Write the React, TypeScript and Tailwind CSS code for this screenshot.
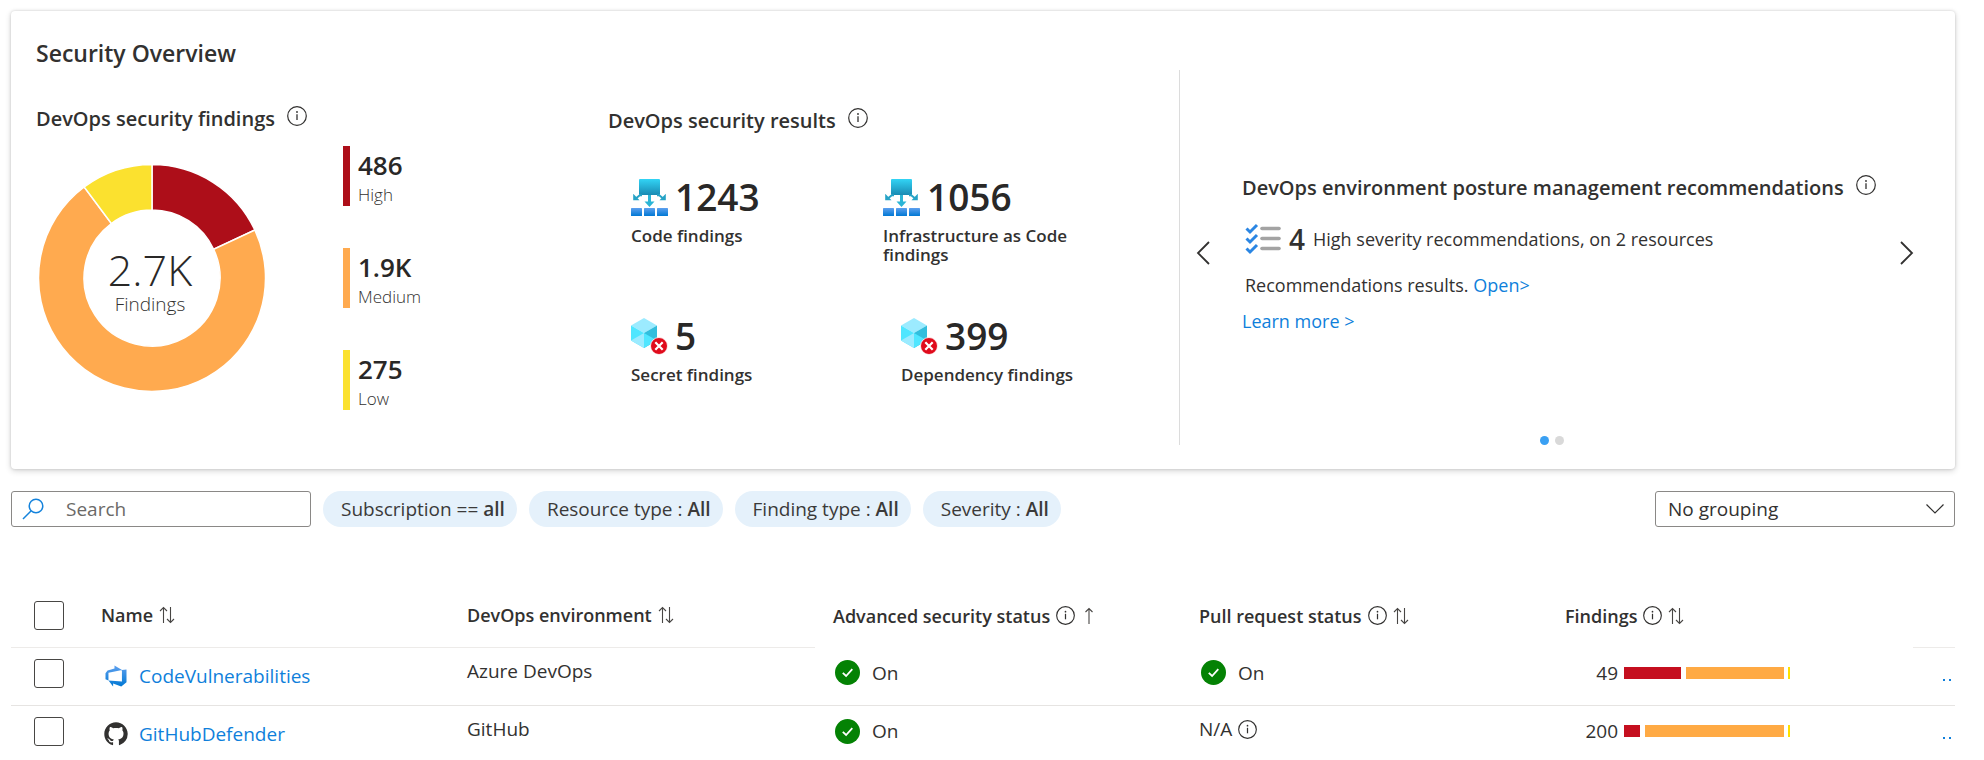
import type { ReactNode } from "react";

type Slice = { label: string; value: string; share: number; fill: string; bar: string };

const slices: Slice[] = [
  { label: "High", value: "486", share: 65, fill: "#ad0e19", bar: "bg-[#ad0e19]" },
  { label: "Medium", value: "1.9K", share: 258.3, fill: "#ffaa4f", bar: "bg-[#ffaa4f]" },
  { label: "Low", value: "275", share: 36.7, fill: "#fbe12f", bar: "bg-[#fbe12f]" },
];

function InfoIcon({ small = false }: { small?: boolean }) {
  return (
    <svg viewBox="0 0 20 20" className={small ? "size-[19px] shrink-0" : "size-5 shrink-0"} fill="none" role="img" aria-label="Info">
      <circle cx="10" cy="10" r="9.3" stroke="#323130" strokeWidth="1.2" />
      <path d="M10 8.2V14" stroke="#323130" strokeWidth="1.3" />
      <circle cx="10" cy="6" r="0.9" fill="#323130" />
    </svg>
  );
}

function SortIcon({ up = false }: { up?: boolean }) {
  return (
    <svg viewBox="0 0 16 18" className="h-[18px] w-4 shrink-0" fill="none" stroke="#484644" strokeWidth="1.1" aria-hidden="true">
      {up ? (
        <path d="M8 17V1.5M4.5 5 8 1.5 11.5 5" />
      ) : (
        <path d="M4.5 17V1.5M1 5l3.5-3.5L8 5M11.5 1v15.5M8 13l3.5 3.5L15 13" />
      )}
    </svg>
  );
}

function point(r: number, deg: number) {
  const a = ((deg - 90) * Math.PI) / 180;
  return `${(114 + r * Math.cos(a)).toFixed(2)} ${(114 + r * Math.sin(a)).toFixed(2)}`;
}

function Donut() {
  let start = 0;
  return (
    <div className="mt-[30px] grid size-[228px] shrink-0 place-items-center">
      <svg viewBox="0 0 228 228" className="col-start-1 row-start-1 size-[228px]" aria-hidden="true">
        {slices.map((s) => {
          const from = start;
          const to = start + s.share;
          start = to;
          const large = s.share > 180 ? 1 : 0;
          return (
            <path
              key={s.label}
              d={`M${point(113.5, from)}A113.5 113.5 0 ${large} 1 ${point(113.5, to)}L${point(68, to)}A68 68 0 ${large} 0 ${point(68, from)}Z`}
              fill={s.fill}
              stroke="#fff"
              strokeWidth="1.5"
            />
          );
        })}
      </svg>
      <div className="col-start-1 row-start-1 pt-2 pr-1 text-center">
        <div className="text-[43px] leading-[44px] font-light text-[#292827]">2.7K</div>
        <div className="text-[19px] leading-6 font-light">Findings</div>
      </div>
    </div>
  );
}

function TemplateIcon() {
  return (
    <svg viewBox="0 0 37 37" className="size-[37px] shrink-0" aria-hidden="true">
      <defs>
        <linearGradient id="tpl-top" x1="0" y1="0" x2="0" y2="1">
          <stop offset="0" stopColor="#32d4f5" />
          <stop offset="1" stopColor="#198ab3" />
        </linearGradient>
        <linearGradient id="tpl-box" x1="0" y1="0" x2="0" y2="1">
          <stop offset="0" stopColor="#5ea0ef" />
          <stop offset="1" stopColor="#0078d4" />
        </linearGradient>
      </defs>
      <rect x="8" y="0" width="21" height="16" rx="1" fill="url(#tpl-top)" />
      <path d="M17 16h3v6.500h3.500L18.500 28l-5-5.500H17z" fill="#2bb5d6" />
      <path d="M11 16.300H8.800L4.800 19.500M26 16.300h2.200l4 3.200" fill="none" stroke="#26a3c6" strokeWidth="2" />
      <path d="M2.200 14.800v6.500h6.300zM34.800 14.800v6.500h-6.300z" fill="#26a3c6" />
      <rect x="0" y="29" width="11" height="8" rx="0.6" fill="url(#tpl-box)" />
      <rect x="13" y="29" width="11" height="8" rx="0.6" fill="url(#tpl-box)" />
      <rect x="26" y="29" width="11" height="8" rx="0.6" fill="url(#tpl-box)" />
    </svg>
  );
}

function CubeIcon() {
  return (
    <svg viewBox="0 0 37 37" className="size-[37px] shrink-0" aria-hidden="true">
      <path d="M13 0 26 7.500 13 15 0 7.500z" fill="#9cebff" />
      <path d="M0 7.500 13 15v15L0 22.500z" fill="#50e6ff" />
      <path d="M26 7.500 13 15v15l13-7.500z" fill="#32bedd" />
      <path d="M0 22.500 13 15v15z" fill="#9cebff" />
      <path d="M26 22.500 13 15v15z" fill="#50e6ff" />
      <circle cx="28" cy="28" r="8.5" fill="#e00b1c" stroke="#fff" strokeWidth="0.8" />
      <path d="m24.300 24.300 7.400 7.400m0-7.400-7.400 7.400" stroke="#fff" strokeWidth="2.2" />
    </svg>
  );
}

function ChecklistIcon() {
  return (
    <svg viewBox="0 0 36 32" className="h-8 w-9 shrink-0" fill="none" aria-hidden="true">
      {[0, 10, 20].map((y) => (
        <g key={y}>
          <path d={`M1.5 ${y + 5.5}l3.500 3.500 7-7`} stroke="#2b86e3" strokeWidth="3" />
          <path d={`M17 ${y + 5.5}h17`} stroke="#a3a3a3" strokeWidth="3.6" strokeLinecap="round" />
        </g>
      ))}
    </svg>
  );
}

function AzureDevOpsIcon() {
  return (
    <svg viewBox="0 0 16 16" className="size-6 shrink-0" aria-hidden="true">
      <defs>
        <linearGradient id="ado" x1="0" y1="1" x2="0" y2="0">
          <stop offset="0" stopColor="#0078d4" />
          <stop offset="1" stopColor="#5ea0ef" />
        </linearGradient>
      </defs>
      <path fill="url(#ado)" d="M15 3.622v8.512L11.500 15l-5.425-1.975v1.958L3.004 10.970l8.951.7V4.005L15 3.622zm-2.984.428L6.994 1v2.001L2.382 4.356 1 6.130v4.029l1.978.873V5.869l9.038-1.818z" />
    </svg>
  );
}

function GitHubIcon() {
  return (
    <svg viewBox="-0.2 -0.2 16.4 16.4" className="size-6 shrink-0" aria-hidden="true">
      <path
        fill="#323130"
        d="M8 0C3.58 0 0 3.58 0 8c0 3.54 2.29 6.53 5.47 7.59.4.07.55-.17.55-.38 0-.19-.01-.82-.01-1.49-2.01.37-2.53-.49-2.69-.94-.09-.23-.48-.94-.82-1.13-.28-.15-.68-.52-.01-.53.63-.01 1.08.58 1.23.82.72 1.21 1.87.87 2.33.66.07-.52.28-.87.51-1.07-1.78-.2-3.64-.89-3.64-3.95 0-.87.31-1.59.82-2.15-.08-.2-.36-1.02.08-2.12 0 0 .67-.21 2.2.82.64-.18 1.32-.27 2-.27.68 0 1.36.09 2 .27 1.53-1.04 2.2-.82 2.2-.82.44 1.1.16 1.92.08 2.12.51.56.82 1.27.82 2.15 0 3.07-1.87 3.75-3.65 3.95.29.25.54.73.54 1.48 0 1.07-.01 1.93-.01 2.2 0 .21.15.46.55.38A8.013 8.013 0 0016 8c0-4.420-3.580-8-8-8z"
      />
    </svg>
  );
}

function Chevron({ d, label }: { d: string; label: string }) {
  return (
    <button type="button" aria-label={label} className="shrink-0">
      <svg viewBox="0 0 14 24" className="h-6 w-[14px]" fill="none" stroke="#323130" strokeWidth="1.8" aria-hidden="true">
        <path d={d} />
      </svg>
    </button>
  );
}

function Metric({ icon, value, label }: { icon: ReactNode; value: string; label: string }) {
  return (
    <div>
      <div className="flex h-10 items-center gap-[7px]">
        {icon}
        <span className="text-[37px] leading-10 font-semibold text-[#292827]">{value}</span>
      </div>
      <div className="mt-[9px] max-w-[200px] text-[17px] leading-[19px] font-semibold">{label}</div>
    </div>
  );
}

function Pill({ name, value }: { name: string; value: string }) {
  return (
    <button type="button" className="h-9 rounded-full bg-[#e5f1fb] pr-3 pl-[18px] text-[19px] whitespace-nowrap text-[#3b3a39]">
      {name} <span className="font-semibold">{value}</span>
    </button>
  );
}

function Tick({ label }: { label: string }) {
  return <input type="checkbox" aria-label={label} className="block h-[29px] w-[30px] appearance-none rounded-[3px] border border-[#484644] bg-white checked:bg-[#0078d4]" />;
}

function StatusOn() {
  return (
    <span className="flex items-center gap-3 pl-0.5">
      <svg viewBox="0 0 25 25" className="size-[25px]" fill="none" aria-hidden="true">
        <circle cx="12.5" cy="12.5" r="12.5" fill="#048204" />
        <path d="m7.800 12.800 3.300 3.200 6.200-6.800" stroke="#fff" strokeWidth="1.8" />
      </svg>
      On
    </span>
  );
}

type Row = { name: string; icon: ReactNode; env: string; pr: boolean; count: number; high: number; medium: number };

const rows: Row[] = [
  { name: "CodeVulnerabilities", icon: <AzureDevOpsIcon />, env: "Azure DevOps", pr: true, count: 49, high: 57, medium: 98 },
  { name: "GitHubDefender", icon: <GitHubIcon />, env: "GitHub", pr: false, count: 200, high: 16, medium: 139 },
];

function HeaderLabel({ text, info = false, up = false }: { text: string; info?: boolean; up?: boolean }) {
  return (
    <button type="button" className="flex items-center gap-1.5 text-lg leading-6 font-semibold whitespace-nowrap">
      {text}
      {info && <InfoIcon small />}
      <SortIcon up={up} />
    </button>
  );
}

export default function App() {
  return (
    <main className="overflow-hidden bg-white px-[11px] pt-[11px] pr-[29px] font-['Open_Sans','Noto_Sans',sans-serif] text-[#323130]">
      <section className="rounded-[4px] bg-white pt-[27px] pb-6 shadow-[0_2px_6px_rgba(0,0,0,0.16),0_0_3px_rgba(0,0,0,0.16)]">
        <h1 className="pb-[2px] pl-[25px] text-[23px] leading-[30px] font-semibold">Security Overview</h1>
        <div className="grid grid-cols-[572fr_571fr_776fr] pl-[25px]">
          <div className="pt-[34px]">
            <h2 className="flex items-center gap-3 text-xl leading-[30px] font-semibold">
              DevOps security findings
              <span className="pb-1.5"><InfoIcon /></span>
            </h2>
            <div className="flex items-start gap-[77px] pl-0.5">
              <Donut />
              <ul className="mt-3 flex flex-col gap-[42px]">
                {slices.map((s) => (
                  <li key={s.label} className="flex h-[60px] gap-2">
                    <span className={`w-[7px] ${s.bar}`} />
                    <div className="pt-1">
                      <div className="text-[26px] leading-[30px] font-semibold text-[#292827]">{s.value}</div>
                      <div className="text-[17px] leading-[30px] font-light">{s.label}</div>
                    </div>
                  </li>
                ))}
              </ul>
            </div>
          </div>

          <div className="pt-9">
            <h2 className="flex items-center gap-3 text-xl leading-[30px] font-semibold">
              DevOps security results
              <span className="pb-1.5"><InfoIcon /></span>
            </h2>
            <div className="mt-[41px] grid grid-cols-[252px_1fr] pl-[23px]">
              <Metric icon={<TemplateIcon />} value="1243" label="Code findings" />
              <Metric icon={<TemplateIcon />} value="1056" label="Infrastructure as Code findings" />
            </div>
            <div className="mt-[52px] grid grid-cols-[270px_1fr] pl-[23px]">
              <Metric icon={<CubeIcon />} value="5" label="Secret findings" />
              <Metric icon={<CubeIcon />} value="399" label="Dependency findings" />
            </div>
          </div>

          <div className="flex h-[375px] min-w-0 flex-col border-l border-[#dcdcdc]">
            <div className="flex flex-1 items-center gap-8 pr-[41px] pl-4">
              <Chevron label="Previous" d="M13 1 2 12l11 11" />
              <div className="min-w-0 flex-1 pt-1.5">
                <h2 className="flex items-center gap-3 text-xl leading-[30px] font-semibold whitespace-nowrap">
                  DevOps environment posture management recommendations
                  <span className="pb-1.5"><InfoIcon /></span>
                </h2>
                <p className="mt-[18px] flex items-center gap-2 pl-[3px] text-lg leading-9">
                  <ChecklistIcon />
                  <strong className="text-[28px] leading-9 font-semibold">4</strong>
                  High severity recommendations, on 2 resources
                </p>
                <p className="mt-2.5 pl-[3px] text-lg leading-9">
                  Recommendations results. <a href="#open" className="text-[#0f7fdb]">Open&gt;</a>
                </p>
                <a href="#learn" className="block text-lg leading-9 text-[#0f7fdb]">Learn more &gt;</a>
              </div>
              <Chevron label="Next" d="M1 1l11 11L1 23" />
            </div>
            <div className="flex justify-center gap-1.5 pr-8">
              <button type="button" aria-label="Page 1" className="size-[9px] rounded-full bg-[#3aa0f3]" />
              <button type="button" aria-label="Page 2" className="size-[9px] rounded-full bg-[#d9d9d9]" />
            </div>
          </div>
        </div>
      </section>

      <div className="mt-[22px] flex items-center gap-3">
        <label className="flex h-9 w-[300px] items-center gap-[22px] rounded-[3px] border border-[#8a8886] pl-2.5">
          <svg viewBox="0 0 22 22" className="size-[22px] shrink-0" fill="none" stroke="#1583dc" strokeWidth="1.5" aria-hidden="true">
            <circle cx="14" cy="8" r="6.8" />
            <path d="m9.200 12.800-8.200 8.200" />
          </svg>
          <input type="search" aria-label="Search" placeholder="Search" className="min-w-0 flex-1 text-[19px] outline-none placeholder:text-[#6b6967]" />
        </label>
        <Pill name="Subscription ==" value="all" />
        <Pill name="Resource type :" value="All" />
        <Pill name="Finding type :" value="All" />
        <Pill name="Severity :" value="All" />
        <div className="ml-auto grid w-[300px] items-center">
          <select aria-label="Grouping" className="col-start-1 row-start-1 h-9 appearance-none rounded-[3px] border border-[#8a8886] bg-white pl-3 text-[19px]">
            <option>No grouping</option>
          </select>
          <svg viewBox="0 0 18 10" className="pointer-events-none col-start-1 row-start-1 mr-[11px] h-2.5 w-[18px] justify-self-end" fill="none" stroke="#323130" strokeWidth="1.2" aria-hidden="true">
            <path d="m0.500 0.500 8.500 8.500 8.500-8.500" />
          </svg>
        </div>
      </div>

      <table className="mt-[57px] w-full table-fixed border-collapse text-left text-[19px] leading-6">
        <colgroup>
          <col className="w-[72px]" />
          <col />
          <col />
          <col />
          <col />
          <col />
          <col className="w-[42px]" />
        </colgroup>
        <thead>
          <tr className="h-[63px]">
            <th className="border-b border-[#edebe9] pl-[23px]"><Tick label="Select all" /></th>
            <th className="border-b border-[#edebe9] pl-[18px]"><HeaderLabel text="Name" /></th>
            <th className="border-b border-[#edebe9] pl-[18px]"><HeaderLabel text="DevOps environment" /></th>
            <th className="pl-[18px]"><HeaderLabel text="Advanced security status" info up /></th>
            <th className="pl-[18px]"><HeaderLabel text="Pull request status" info /></th>
            <th className="pl-[18px]"><HeaderLabel text="Findings" info /></th>
            <th className="border-b border-[#edebe9]" aria-label="Actions" />
          </tr>
        </thead>
        <tbody>
          {rows.map((r) => (
            <tr key={r.name} className="h-[58px] border-b border-[#e6e4e2] last:border-0">
              <td className="pb-1.5 pl-[23px]"><Tick label={`Select ${r.name}`} /></td>
              <td className="pl-[21px]">
                <span className="flex items-center gap-[11px]">
                  {r.icon}
                  <a href={`#${r.name}`} className="text-[#0f7fdb]">{r.name}</a>
                </span>
              </td>
              <td className="pb-2.5 pl-[18px]">{r.env}</td>
              <td className="pb-1.5 pl-[18px]"><StatusOn /></td>
              <td className="pb-1.5 pl-[18px]">
                {r.pr ? <StatusOn /> : <span className="flex items-center gap-1.5 pb-1">N/A <InfoIcon small /></span>}
              </td>
              <td className="pb-1.5 pl-[18px]">
                <span className="flex items-center gap-1.5">
                  <span className="w-[53px] text-right">{r.count}</span>
                  <span className="flex w-[166px] justify-between">
                    <span className="h-3 bg-[#c50f1f]" style={{ width: r.high }} />
                    <span className="h-3 bg-[#ffaa44]" style={{ width: r.medium }} />
                    <span className="h-3 w-0.5 bg-[#fce100]" />
                  </span>
                </span>
              </td>
              <td className="pl-7">
                <button type="button" aria-label={`More actions for ${r.name}`} className="flex w-3 gap-1 overflow-hidden pt-2 pl-0.5">
                  <span className="size-0.5 shrink-0 bg-[#0f7fdb]" />
                  <span className="size-0.5 shrink-0 bg-[#0f7fdb]" />
                </button>
              </td>
            </tr>
          ))}
        </tbody>
      </table>
    </main>
  );
}
